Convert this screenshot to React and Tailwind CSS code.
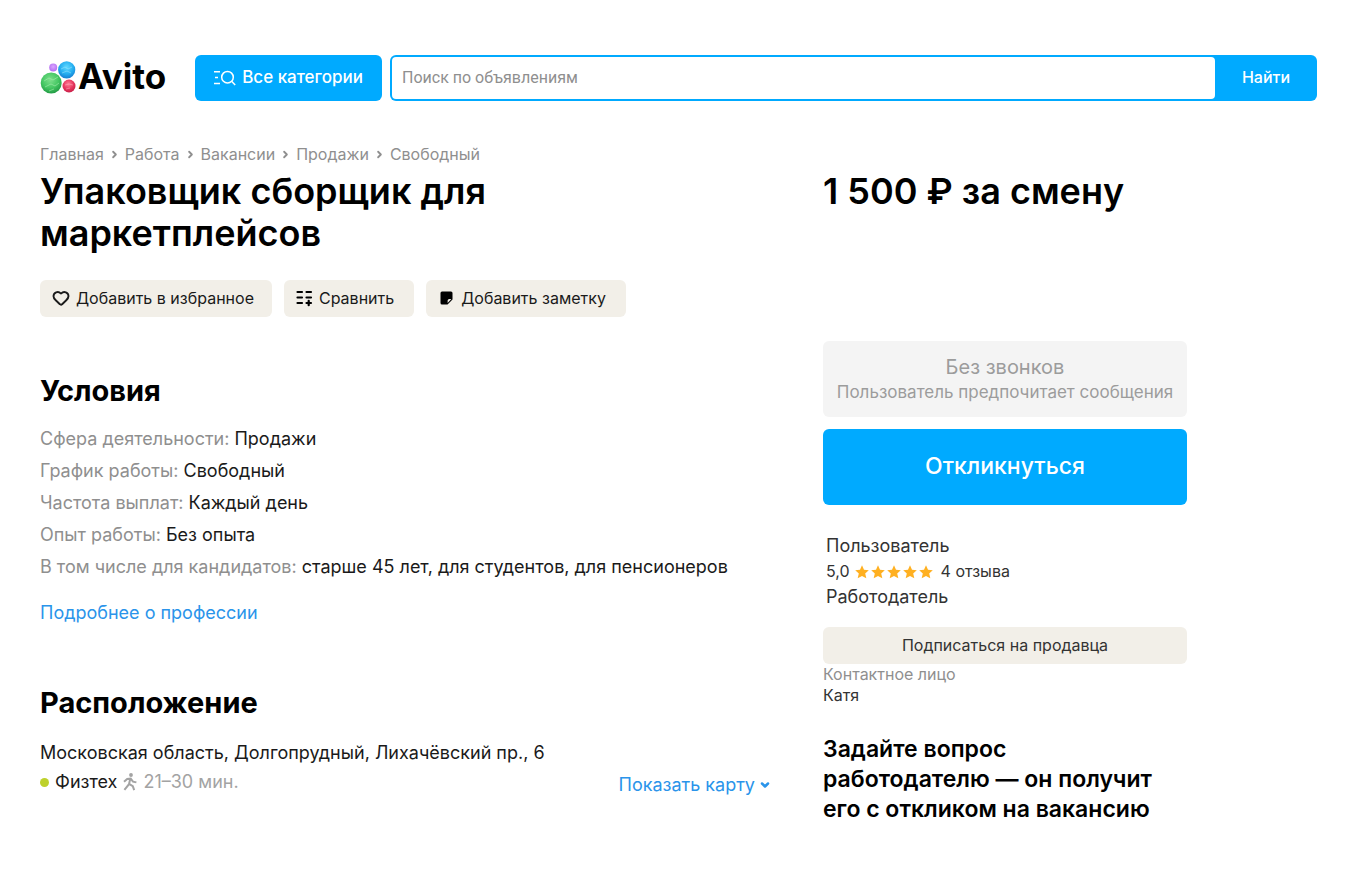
import React, { useState } from 'react';
import { Heart, ChevronDown, ChevronRight } from 'lucide-react';

const breadcrumbs = ['Главная', 'Работа', 'Вакансии', 'Продажи', 'Свободный'];

const conditions = [
  { label: 'Сфера деятельности', value: 'Продажи' },
  { label: 'График работы', value: 'Свободный' },
  { label: 'Частота выплат', value: 'Каждый день' },
  { label: 'Опыт работы', value: 'Без опыта' },
  { label: 'В том числе для кандидатов', value: 'старше 45 лет, для студентов, для пенсионеров' },
];

function LogoMark() {
  return (
    <svg width="36" height="34" viewBox="0 0 36 34" aria-hidden="true">
      <defs>
        <radialGradient id="green" cx="0.45" cy="0.35" r="0.65">
          <stop offset="0" stopColor="#7ee08c" />
          <stop offset="0.6" stopColor="#45c763" />
          <stop offset="1" stopColor="#239c45" />
        </radialGradient>
        <radialGradient id="blue" cx="0.5" cy="0.35" r="0.65">
          <stop offset="0" stopColor="#5fd8ff" />
          <stop offset="0.6" stopColor="#25aef0" />
          <stop offset="1" stopColor="#1680d2" />
        </radialGradient>
        <radialGradient id="red" cx="0.45" cy="0.35" r="0.65">
          <stop offset="0" stopColor="#ff7d97" />
          <stop offset="0.6" stopColor="#e6375e" />
          <stop offset="1" stopColor="#c91e48" />
        </radialGradient>
        <radialGradient id="violet" cx="0.5" cy="0.4" r="0.6">
          <stop offset="0" stopColor="#d9a5ff" />
          <stop offset="1" stopColor="#b36cf0" />
        </radialGradient>
      </defs>
      <circle cx="13.2" cy="6.5" r="4" fill="url(#violet)" />
      <circle cx="26.7" cy="8.8" r="8.6" fill="url(#blue)" />
      <circle cx="11.2" cy="22" r="10.5" fill="url(#green)" />
      <circle cx="29" cy="25" r="6.5" fill="url(#red)" />
      <path d="M4 20l5-3 4 2 5-3M5 26l6-3 4 2 4-3M9 30l5-2" stroke="#a9efb0" strokeWidth="0.8" fill="none" opacity="0.7" />
      <path d="M21 8l4-2 3 2 4-2M22 12l5-2 4 2" stroke="#a5e8ff" strokeWidth="0.7" fill="none" opacity="0.7" />
      <path d="M25 24l4-1 4 1M26 28l4-1" stroke="#ffb3c2" strokeWidth="0.7" fill="none" opacity="0.7" />
    </svg>
  );
}

function CatalogIcon() {
  return (
    <svg width="22" height="16" viewBox="0 0 22 16" fill="none" stroke="currentColor" strokeWidth="1.5" aria-hidden="true">
      <path d="M0 1.8h6M1 7.5h3M0 13.5h6" />
      <circle cx="13.5" cy="7.2" r="5.8" />
      <path d="M17.6 11.3L21.2 15" />
    </svg>
  );
}

function CompareIcon() {
  return (
    <svg width="17" height="18" viewBox="0 0 17 18" fill="none" stroke="#000000" strokeWidth="2.2" strokeLinecap="round" aria-hidden="true">
      <path d="M1.5 3h4.5M10.5 3H15M1.5 8.5h4.5M10.5 8.5H15M1.5 14h4.5M10.5 14H15M12.7 11.8v4.4" />
    </svg>
  );
}

function NoteIcon() {
  return (
    <svg width="13" height="14" viewBox="0 0 13 14" aria-hidden="true">
      <path d="M2 0.5h9a1.5 1.5 0 0 1 1.5 1.5v6.5L7.5 13.5H2A1.5 1.5 0 0 1 .5 12V2A1.5 1.5 0 0 1 2 .5z" fill="#000000" />
      <path d="M7.6 12V9.8a1.8 1.8 0 0 1 1.8-1.8h2z" fill="#f2efe8" />
    </svg>
  );
}

function WalkIcon() {
  return (
    <svg width="14" height="18" viewBox="0 0 14 18" fill="none" stroke="currentColor" strokeWidth="2" aria-hidden="true">
      <circle cx="8" cy="2" r="1.9" fill="currentColor" stroke="none" />
      <path d="M1 8.8L4.2 6l3.5-.4L10 8.6l3.4.8M7.2 6L6 11.2l-4.6 5.6M6 10.8l3.8 2.4 1.4 4" />
    </svg>
  );
}

function Star() {
  return (
    <svg width="14" height="14" viewBox="0 0 14 14" fill="#ffb021" aria-hidden="true">
      <path d="M7 .3l2 4.4 4.8.5-3.6 3.2 1.1 4.9L7 10.9l-4.3 2.4 1.1-4.9L.2 5.2 5 4.7z" />
    </svg>
  );
}

function Header() {
  const [query, setQuery] = useState('');

  return (
    <header className="flex items-center pt-[55px] pl-10 pr-[43px]">
      <a href="#" className="mr-[29px] flex items-center gap-0.5">
        <LogoMark />
        <span className="pb-1 text-[35px] leading-10 font-bold text-black">Avito</span>
      </a>
      <button className="mr-2 flex h-[46px] items-center gap-1.5 rounded-md bg-[#00aaff] px-[19px] text-[17px] font-medium whitespace-nowrap text-white">
        <CatalogIcon />
        Все категории
      </button>
      <form className="flex h-[46px] min-w-0 flex-1 rounded-md bg-[#00aaff] p-0.5 pr-0" onSubmit={(e) => e.preventDefault()}>
        <input
          type="text"
          aria-label="Поиск по объявлениям"
          placeholder="Поиск по объявлениям"
          value={query}
          onChange={(e) => setQuery(e.target.value)}
          className="min-w-0 flex-1 rounded-[4px] bg-white px-2.5 font-[Roboto,sans-serif] text-base text-black outline-none placeholder:text-[#8f8f8f]"
        />
        <button type="submit" className="w-[102px] pb-0.5 text-base font-medium text-white">Найти</button>
      </form>
    </header>
  );
}

function Listing() {
  return (
    <section className="min-w-0">
      <nav className="flex items-center gap-[5px] text-base leading-5 whitespace-nowrap text-[#8f8f8f]">
        {breadcrumbs.map((item, index) => (
          <React.Fragment key={item}>
            {index > 0 && <ChevronRight size={11} strokeWidth={4} />}
            <a href="#">{item}</a>
          </React.Fragment>
        ))}
      </nav>
      <h1 className="mt-1.5 max-w-[560px] text-4xl leading-[42px] font-semibold text-black">
        Упаковщик сборщик для маркетплейсов
      </h1>

      <div className="mt-[26px] flex gap-3 text-base whitespace-nowrap">
        <button className="flex h-[37px] items-center gap-1.5 rounded-md bg-[#f2efe8] pr-[18px] pb-0.5 pl-3">
          <Heart size={18} strokeWidth={2.5} />
          Добавить в избранное
        </button>
        <button className="flex h-[37px] items-center gap-1.5 rounded-md bg-[#f2efe8] pr-5 pb-0.5 pl-3">
          <CompareIcon />
          Сравнить
        </button>
        <button className="flex h-[37px] items-center gap-2 rounded-md bg-[#f2efe8] pr-5 pb-0.5 pl-3.5">
          <NoteIcon />
          Добавить заметку
        </button>
      </div>

      <h2 className="mt-14 text-[29px] leading-9 font-bold text-black">Условия</h2>
      <ul className="mt-3.5 text-lg leading-8">
        {conditions.map((item) => (
          <li key={item.label}>
            <span className="text-[#8f8f8f]">{item.label}: </span>
            {item.value}
          </li>
        ))}
      </ul>
      <a href="#" className="mt-3.5 block text-lg leading-8 text-[#2a94ea]">Подробнее о профессии</a>

      <h2 className="mt-14 text-[29px] leading-9 font-bold text-black">Расположение</h2>
      <p className="mt-4 text-lg leading-8">Московская область, Долгопрудный, Лихачёвский пр., 6</p>
      <div className="flex items-start justify-between text-lg">
        <div className="flex items-center gap-1.5 leading-[26px]">
          <span className="size-[9px] rounded-full bg-[#bed12c]" />
          Физтех
          <span className="flex items-center gap-1.5 text-[#a3a3a3]">
            <WalkIcon />
            21–30 мин.
          </span>
        </div>
        <button className="flex items-center gap-1 leading-8 text-[#2a94ea]">
          Показать карту
          <ChevronDown size={12} strokeWidth={5} />
        </button>
      </div>
    </section>
  );
}

function Sidebar() {
  return (
    <aside className="pt-[26px]">
      <p className="text-4xl leading-[42px] font-semibold whitespace-nowrap text-black">1 500 ₽ за смену</p>

      <button disabled className="mt-[129px] flex h-[76px] w-full flex-col items-center justify-center rounded-md bg-[#f4f4f4] whitespace-nowrap text-[#9c9c9c]">
        <span className="text-xl leading-[26px]">Без звонков</span>
        <span className="text-[17px] leading-6">Пользователь предпочитает сообщения</span>
      </button>
      <button className="mt-3 h-[76px] w-full rounded-md bg-[#00aaff] pb-0.5 text-[23px] font-medium text-white">
        Откликнуться
      </button>

      <div className="mt-7 pl-[3px] text-lg leading-[26px] text-[#333333]">
        <p>Пользователь</p>
        <div className="flex items-center text-base leading-[25px]">
          5,0
          <span className="ml-[5px] flex gap-0.5">
            {[1, 2, 3, 4, 5].map((n) => <Star key={n} />)}
          </span>
          <a href="#" className="ml-2">4 отзыва</a>
        </div>
        <p>Работодатель</p>
      </div>

      <button className="mt-[17px] h-[37px] w-full rounded-md bg-[#f2efe8] pb-0.5 text-base text-[#333333]">
        Подписаться на продавца
      </button>
      <p className="text-base leading-[21px] text-[#8f8f8f]">Контактное лицо</p>
      <p className="text-base leading-[21px] text-[#333333]">Катя</p>

      <h3 className="mt-7 text-[23px] leading-[30px] font-semibold whitespace-nowrap text-black">
        Задайте вопрос<br />работодателю — он получит<br />его с откликом на вакансию
      </h3>
    </aside>
  );
}

function App() {
  return (
    <div className="min-h-screen bg-white font-[Inter,sans-serif] text-[#1a1a1a]">
      <Header />
      <main className="grid grid-cols-[minmax(0,1fr)_364px] gap-x-13 pt-[43px] pr-[173px] pb-12 pl-10">
        <Listing />
        <Sidebar />
      </main>
    </div>
  );
}

export default App;
